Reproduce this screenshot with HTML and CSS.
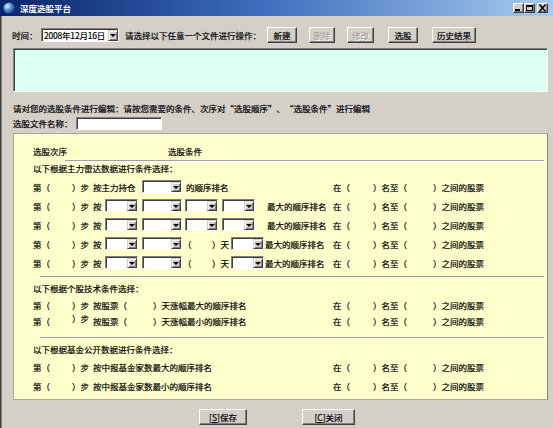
FILE: index.html
```html
<!DOCTYPE html>
<html lang="zh-CN">
<head>
<meta charset="utf-8">
<title>深度选股平台</title>
<link rel="stylesheet" href="styles.css">
</head>
<body>
<div class="window">
  <div class="titlebar">
    <svg class="app-icon" width="12" height="12" viewBox="0 0 12 12">
      <defs>
        <radialGradient id="g" cx="0.35" cy="0.35" r="0.7">
          <stop offset="0" stop-color="#e8f4ff"/>
          <stop offset="0.45" stop-color="#5b9be0"/>
          <stop offset="1" stop-color="#1a3f8a"/>
        </radialGradient>
      </defs>
      <circle cx="6" cy="6" r="5.5" fill="url(#g)"/>
    </svg>
    <span class="title">深度选股平台</span>
    <div class="caption-btns">
      <span class="cbtn"><svg width="9" height="8" viewBox="0 0 9 8"><rect x="1" y="5" width="5" height="2" fill="#000"/></svg></span>
      <span class="cbtn"><svg width="9" height="8" viewBox="0 0 9 8"><rect x="1.5" y="1.5" width="6" height="5" fill="none" stroke="#000"/><rect x="1" y="1" width="7" height="2" fill="#000"/></svg></span>
      <span class="cbtn close"><svg width="9" height="8" viewBox="0 0 9 8"><path d="M1.5 0.5 L7.5 7.5 M7.5 0.5 L1.5 7.5" stroke="#000" stroke-width="1.6"/></svg></span>
    </div>
  </div>

  <div class="client">
    <div class="toolbar">
      <span class="lbl-time">时间：</span>
      <div class="combo date"><span class="combo-val">2008年12月16日</span><span class="arrow"></span></div>
      <span class="prompt">请选择以下任意一个文件进行操作：</span>
      <button class="btn b-new">新建</button>
      <button class="btn b-del disabled">删除</button>
      <button class="btn b-mod disabled">修改</button>
      <button class="btn b-pick">选股</button>
      <button class="btn b-hist">历史结果</button>
    </div>

    <div class="memo"></div>

    <div class="hint">请对您的选股条件进行编辑：请按您需要的条件、次序对<span class="q qo">“</span>选股顺序<span class="q qc">”</span>、<span class="q qo">“</span>选股条件<span class="q qc">”</span>进行编辑</div>
    <div class="fname"><span class="fname-lbl">选股文件名称：</span><span class="edit"></span></div>

    <div class="panel">
      <div class="panel-head"><span class="h-order">选股次序</span><span class="h-cond">选股条件</span></div>
      <div class="head-line"></div>

      <div class="sec-title">以下根据主力雷达数据进行条件选择：</div>
      <div class="rows">
        <div class="row">
          <span class="c1">第（</span><span class="c2">）步</span>
          <div class="cond">
            <span class="t-main">按主力持仓</span>
            <div class="combo w40"><span class="arrow"></span></div>
            <span class="ml4">的顺序排名</span>
          </div>
          <span class="c-at">在（</span><span class="c-to">）名至（</span><span>）之间的股票</span>
        </div>
        <div class="row">
          <span class="c1">第（</span><span class="c2">）步</span>
          <div class="cond">
            <span class="t-by">按</span>
            <div class="combo w33"><span class="arrow"></span></div>
            <div class="combo w40 ml4"><span class="arrow"></span></div>
            <div class="combo w33 ml3"><span class="arrow"></span></div>
            <div class="combo w33 ml4"><span class="arrow"></span></div>
            <span class="ml12">最大的顺序排名</span>
          </div>
          <span class="c-at">在（</span><span class="c-to">）名至（</span><span>）之间的股票</span>
        </div>
        <div class="row">
          <span class="c1">第（</span><span class="c2">）步</span>
          <div class="cond">
            <span class="t-by">按</span>
            <div class="combo w33"><span class="arrow"></span></div>
            <div class="combo w40 ml4"><span class="arrow"></span></div>
            <div class="combo w33 ml3"><span class="arrow"></span></div>
            <div class="combo w33 ml4"><span class="arrow"></span></div>
            <span class="ml12">最大的顺序排名</span>
          </div>
          <span class="c-at">在（</span><span class="c-to">）名至（</span><span>）之间的股票</span>
        </div>
        <div class="row">
          <span class="c1">第（</span><span class="c2">）步</span>
          <div class="cond">
            <span class="t-by">按</span>
            <div class="combo w33"><span class="arrow"></span></div>
            <div class="combo w40 ml4"><span class="arrow"></span></div>
            <span class="t-open">（</span><span class="t-day">）天</span>
            <div class="combo w33"><span class="arrow"></span></div>
            <span class="ml1">最大的顺序排名</span>
          </div>
          <span class="c-at">在（</span><span class="c-to">）名至（</span><span>）之间的股票</span>
        </div>
        <div class="row">
          <span class="c1">第（</span><span class="c2">）步</span>
          <div class="cond">
            <span class="t-by">按</span>
            <div class="combo w33"><span class="arrow"></span></div>
            <div class="combo w40 ml4"><span class="arrow"></span></div>
            <span class="t-open">（</span><span class="t-day">）天</span>
            <div class="combo w33"><span class="arrow"></span></div>
            <span class="ml1">最大的顺序排名</span>
          </div>
          <span class="c-at">在（</span><span class="c-to">）名至（</span><span>）之间的股票</span>
        </div>
      </div>

      <div class="sep"></div>
      <div class="sec-title">以下根据个股技术条件选择：</div>
      <div class="rows short">
        <div class="row">
          <span class="c1">第（</span><span class="c2">）步</span>
          <div class="cond"><span class="t-stock">按股票（</span><span>）天涨幅最大的顺序排名</span></div>
          <span class="c-at">在（</span><span class="c-to">）名至（</span><span>）之间的股票</span>
        </div>
        <div class="row">
          <span class="c1">第（</span><span class="c2 raised">）步</span>
          <div class="cond"><span class="t-stock">按股票（</span><span>）天涨幅最小的顺序排名</span></div>
          <span class="c-at">在（</span><span class="c-to">）名至（</span><span>）之间的股票</span>
        </div>
      </div>

      <div class="sep sep2"></div>
      <div class="sec-title sec3">以下根据基金公开数据进行条件选择：</div>
      <div class="rows">
        <div class="row">
          <span class="c1">第（</span><span class="c2">）步</span>
          <div class="cond"><span>按中报基金家数最大的顺序排名</span></div>
          <span class="c-at">在（</span><span class="c-to">）名至（</span><span>）之间的股票</span>
        </div>
        <div class="row">
          <span class="c1">第（</span><span class="c2">）步</span>
          <div class="cond"><span>按中报基金家数最小的顺序排名</span></div>
          <span class="c-at">在（</span><span class="c-to">）名至（</span><span>）之间的股票</span>
        </div>
      </div>
    </div>

    <div class="footer">
      <button class="btn b-save">[<u>S</u>]保存</button>
      <button class="btn b-close">[<u>C</u>]关闭</button>
    </div>
  </div>
</div>
</body>
</html>
```

FILE: styles.css
```css
* { box-sizing: border-box; }
html, body { margin: 0; padding: 0; }
body {
  width: 553px;
  height: 428px;
  overflow: hidden;
  background: #d4d0c8;
  font-family: "Noto Sans CJK SC", "DejaVu Sans", sans-serif;
  font-size: 8.5px;
  color: #000;
  -webkit-text-stroke: 0.2px #000;
}
.window {
  width: 553px;
  height: 428px;
  display: flex;
  flex-direction: column;
  background: #d4d0c8;
}

/* title bar */
.titlebar {
  height: 16px;
  flex: none;
  display: flex;
  align-items: center;
  padding-left: 3px;
  background: linear-gradient(to right, #0a246a 0%, #3a6ab8 45%, #a6caf0 100%);
  color: #fff;
  -webkit-text-stroke: 0;
}
.app-icon { flex: none; }
.title { margin-left: 5px; font-weight: bold; font-size: 8.5px; line-height: 12px; }
.caption-btns { margin-left: auto; margin-right: 5px; display: flex; align-items: center; }
.cbtn {
  width: 11px;
  height: 10px;
  display: flex;
  align-items: center;
  justify-content: center;
  background: #d4d0c8;
  border: 1px solid;
  border-color: #fff #404040 #404040 #fff;
  box-shadow: inset -1px -1px #808080;
}
.cbtn.close { margin-left: 2px; }

/* client area */
.client {
  flex: 1;
  display: flex;
  flex-direction: column;
  border-left: 1px solid #404040;
  box-shadow: inset 1px 0 #808080;
}

.toolbar {
  height: 17px;
  margin-top: 10px;
  padding-left: 11px;
  display: flex;
  align-items: center;
  line-height: 12px;
}
.lbl-time { width: 29px; }
.combo {
  display: flex;
  align-items: stretch;
  justify-content: flex-end;
  height: 13px;
  background: #fff;
  border: 1px solid;
  border-color: #808080 #fff #fff #808080;
  box-shadow: inset 1px 1px #404040;
  padding: 1px 0 0 1px;
  flex: none;
}
.combo.date { width: 78px; height: 14px; justify-content: space-between; }
.combo-val { padding-left: 1px; line-height: 11px; white-space: nowrap; letter-spacing: -0.2px; }
.arrow {
  width: 10px;
  flex: none;
  display: flex;
  align-items: center;
  justify-content: center;
  background: #d4d0c8;
  border: 1px solid;
  border-color: #d4d0c8 #404040 #404040 #d4d0c8;
  box-shadow: inset 1px 1px #fff, inset -1px -1px #808080;
}
.arrow::after {
  content: "";
  border-left: 3px solid transparent;
  border-right: 3px solid transparent;
  border-top: 3px solid #000;
}
.prompt { margin-left: 6px; width: 142px; white-space: nowrap; }

.btn {
  height: 16px;
  padding: 0;
  font-family: inherit;
  font-size: 8.5px;
  line-height: 12px;
  color: #000;
  background: #d4d0c8;
  border: 1px solid;
  border-color: #fff #404040 #404040 #fff;
  box-shadow: inset -1px -1px #808080;
  flex: none;
  -webkit-text-stroke: 0.2px #000;
}
.btn.disabled { color: #9a968e; text-shadow: 1px 1px #fff; -webkit-text-stroke: 0; }
.b-new { width: 30px; }
.b-del { width: 26px; margin-left: 12px; }
.b-mod { width: 27px; margin-left: 12px; }
.b-pick { width: 30px; margin-left: 14px; }
.b-hist { width: 44px; margin-left: 14px; }

.memo {
  height: 44px;
  margin: 5px 5px 0 12px;
  background: #dcfff5;
  border: 1px solid;
  border-color: #808080 #fff #fff #808080;
  box-shadow: inset 1px 1px #404040;
}

.hint {
  margin-top: 10px;
  padding-left: 12px;
  line-height: 13px;
  white-space: nowrap;
}
.q { display: inline-block; width: 8.5px; }
.qo { text-align: right; }
.qc { text-align: left; }
.fname {
  margin-top: 1px;
  padding-left: 12px;
  height: 14px;
  display: flex;
  align-items: center;
}
.fname-lbl { width: 63px; }
.edit {
  width: 86px;
  height: 13px;
  background: #fff;
  border: 1px solid;
  border-color: #808080 #fff #fff #808080;
  box-shadow: inset 1px 1px #404040;
}

/* yellow panel */
.panel {
  height: 267px;
  margin: 3px 5px 0 12px;
  padding-left: 19px;
  background: #ffffcc;
  border: 1px solid #a8a8a0;
  border-right-color: #808080;
  display: flex;
  flex-direction: column;
  line-height: 12px;
}
.panel-head {
  padding-top: 11px;
  height: 24px;
  display: flex;
}
.h-order { width: 135px; }
.head-line {
  margin: 2px 3px 0 32px;
  border-top: 1px solid #a0a0a0;
  border-bottom: 1px solid #fff;
}
.sec-title { margin-bottom: 3px; }
.sec-title.sec3 { margin-bottom: 2px; }
.sep {
  margin: 4px 3px 4px 7px;
  border-top: 1px solid #a0a0a0;
  border-bottom: 1px solid #fff;
}
.sep2 { margin-top: 8px; }

.rows { display: flex; flex-direction: column; }
.row {
  height: 19px;
  display: flex;
  align-items: center;
  white-space: nowrap;
}
.rows.short .row { height: 16px; }
.c1 { width: 39px; flex: none; }
.c2 { width: 21px; flex: none; }
.c2.raised { align-self: flex-start; margin-top: -1px; }
.cond { width: 240px; flex: none; display: flex; align-items: center; }
.c-at { width: 40px; flex: none; }
.c-to { width: 60px; flex: none; }
.t-main { width: 49px; }
.t-by { width: 12px; }
.t-open { width: 29px; margin-left: 1px; }
.t-day { width: 19px; }
.t-stock { width: 60px; }
.w33 { width: 33px; }
.w40 { width: 40px; }
.ml1 { margin-left: 1px; }
.ml3 { margin-left: 3px; }
.ml4 { margin-left: 4px; }
.ml12 { margin-left: 12px; }

.footer {
  margin-top: 9px;
  display: flex;
  justify-content: center;
  gap: 55px;
}
.b-save { width: 48px; }
.b-close { width: 53px; }
```
